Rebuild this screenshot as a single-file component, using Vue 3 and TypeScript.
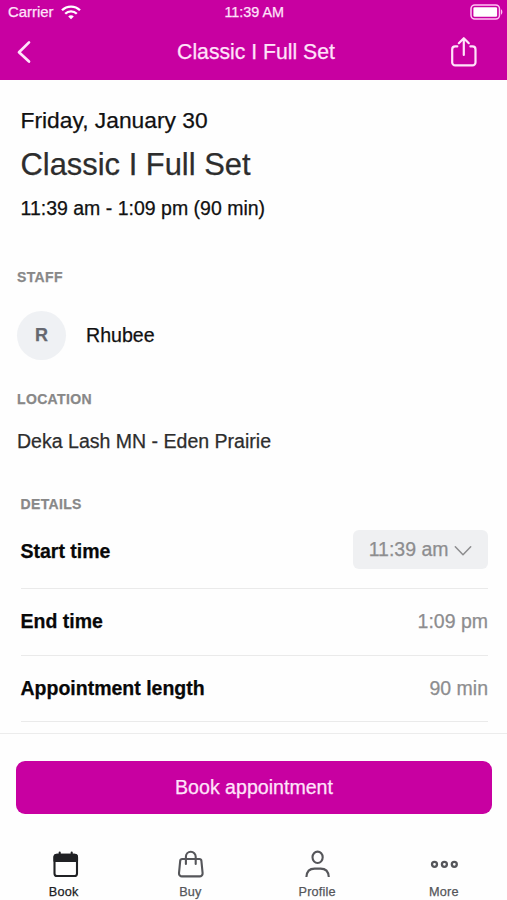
<script setup lang="ts">
interface Detail {
  label: string
  value: string
  picker?: boolean
}

const details: Detail[] = [
  { label: 'Start time', value: '11:39 am', picker: true },
  { label: 'End time', value: '1:09 pm' },
  { label: 'Appointment length', value: '90 min' },
]

const tabs = ['Book', 'Buy', 'Profile', 'More'] as const
</script>

<template>
  <div class="screen">
    <header class="top">
      <div class="status">
        <div class="carrier">
          <span>Carrier</span>
          <svg class="wifi" width="20" height="15" viewBox="0 0 20 15" fill="none" stroke="currentColor" stroke-width="2.3">
            <path d="M1 5.3C6 .3 14 .3 19 5.3" />
            <path d="M4.2 8.7c3.2-3.2 8.4-3.2 11.6 0" />
            <path d="M7.2 11.4c1.6-1.5 4-1.5 5.6 0L10 14.3z" fill="currentColor" stroke="none" />
          </svg>
        </div>
        <span class="clock">11:39 AM</span>
        <svg class="battery" width="33" height="16" viewBox="0 0 33 16" fill="none">
          <rect x="1" y="1" width="28.5" height="14" rx="3.8" stroke="#ffc4f4" stroke-width="1.5" />
          <rect x="3.4" y="3.3" width="23.7" height="9.4" rx="1.2" fill="#fff" />
          <path d="M31 5.3c1.8.8 1.8 4.6 0 5.4z" fill="#ffc4f4" />
        </svg>
      </div>
      <div class="nav">
        <button class="icon-button" aria-label="Back">
          <svg width="16" height="24" viewBox="0 0 16 24" fill="none" stroke="currentColor" stroke-width="2.7" stroke-linecap="round" stroke-linejoin="round">
            <path d="M13 2.4 3 12.2 13 21.6" />
          </svg>
        </button>
        <h1>Classic I Full Set</h1>
        <button class="icon-button" aria-label="Share">
          <svg width="28" height="32" viewBox="0 0 28 32" fill="none" stroke="currentColor" stroke-width="2.2" stroke-linecap="round" stroke-linejoin="round">
            <path d="M7.3 10.4H5.2a3 3 0 0 0-3 3v13a3 3 0 0 0 3 3h17.3a3 3 0 0 0 3-3v-13a3 3 0 0 0-3-3h-2.1M13.8 19V2.4M8.8 7.2l5-5 5 5" />
          </svg>
        </button>
      </div>
    </header>

    <main class="content">
      <section class="summary">
        <p class="date">Friday, January 30</p>
        <h2>Classic I Full Set</h2>
        <p class="time">11:39 am - 1:09 pm (90 min)</p>
      </section>

      <section class="staff">
        <h3>STAFF</h3>
        <div class="person">
          <span class="avatar">R</span>
          <span>Rhubee</span>
        </div>
      </section>

      <section class="location">
        <h3>LOCATION</h3>
        <p>Deka Lash MN - Eden Prairie</p>
      </section>

      <section class="details">
        <h3>DETAILS</h3>
        <div v-for="item in details" :key="item.label" class="row" :class="{ 'row-picker': item.picker }">
          <strong>{{ item.label }}</strong>
          <button v-if="item.picker" class="picker">
            <span>{{ item.value }}</span>
            <svg width="18" height="12" viewBox="0 0 18 12" fill="none" stroke="currentColor" stroke-width="1.5" stroke-linecap="round" stroke-linejoin="round">
              <path d="M1.3 1.7 9 9.8l7.7-8.1" />
            </svg>
          </button>
          <span v-else class="value">{{ item.value }}</span>
        </div>
      </section>
    </main>

    <div class="action">
      <button class="book">Book appointment</button>
    </div>

    <nav class="tabs">
      <a v-for="tab in tabs" :key="tab" class="tab" :class="{ active: tab === 'Book' }">
        <svg width="30" height="30" viewBox="0 0 30 30" fill="none" stroke="currentColor" stroke-width="2.1" stroke-linecap="round" stroke-linejoin="round">
          <template v-if="tab === 'Book'">
            <rect x="5.5" y="5.7" width="22.5" height="21.3" rx="2.6" />
            <path d="M5.5 12V8Q5.5 5.7 8 5.7h17.5Q28 5.7 28 8v4z" fill="currentColor" />
            <path d="M10.7 3.5v3M22.7 3.5v3" />
          </template>
          <template v-else-if="tab === 'Buy'">
            <path d="M7.2 10h17.2a2 2 0 0 1 2 1.8l1.2 12.4a3 3 0 0 1-3 3.2H7a3 3 0 0 1-3-3.2l1.2-12.4a2 2 0 0 1 2-1.8z" />
            <path d="M10.9 14.9V7.7a4.9 4.9 0 0 1 9.8 0v7.2" />
          </template>
          <template v-else-if="tab === 'Profile'">
            <ellipse cx="15.6" cy="8.3" rx="5.1" ry="5.7" />
            <path stroke-linecap="butt" d="M4.4 28c.3-5.9 3.8-8.4 8.3-8.4h5.8c4.5 0 8 2.5 8.3 8.4" />
          </template>
          <template v-else>
            <circle cx="5.5" cy="15.3" r="2.5" stroke-width="2.3" />
            <circle cx="15.4" cy="15.3" r="2.5" stroke-width="2.3" />
            <circle cx="25.3" cy="15.3" r="2.5" stroke-width="2.3" />
          </template>
        </svg>
        <span>{{ tab }}</span>
      </a>
    </nav>
  </div>
</template>

<style>
body {
  margin: 0;
  background: #fefefe;
}
</style>

<style scoped>
.screen {
  display: flex;
  flex-direction: column;
  width: 100%;
  height: 900px;
  overflow: hidden;
  background: #fefefe;
  color: #111;
  font-family: "Liberation Sans", Arial, sans-serif;
  -webkit-text-stroke: 0.25px currentColor;
}
h1, h2, h3, p {
  margin: 0;
  font-weight: 400;
}
button {
  margin: 0;
  padding: 0;
  border: 0;
  background: none;
  color: inherit;
  font: inherit;
}
svg {
  display: block;
  flex: none;
}
.top {
  flex: none;
  height: 80px;
  background: #c800a1;
  color: #ffe3fa;
}
.status {
  display: grid;
  grid-template-columns: 1fr auto 1fr;
  align-items: center;
  height: 24px;
  padding: 0 4.5px 0 8px;
}
.carrier {
  display: flex;
  align-items: center;
  gap: 7px;
  font-size: 14.9px;
}
.wifi {
  color: #fff;
}
.clock {
  padding-right: 2px;
  font-size: 14.4px;
}
.battery {
  justify-self: end;
}
.nav {
  display: grid;
  grid-template-columns: 40px 1fr 40px;
  align-items: center;
  height: 56px;
  padding: 0 24px 0 16px;
}
.icon-button {
  display: flex;
  justify-content: flex-start;
}
.icon-button:last-child {
  justify-content: flex-end;
  padding-right: 5px;
}
h1 {
  padding-left: 13px;
  font-size: 21.2px;
  line-height: 56px;
  text-align: center;
}
.content {
  flex: 1;
  min-height: 0;
  overflow: hidden;
}
.summary {
  padding: 23px 20px 0 20.5px;
}
.date {
  font-size: 22.8px;
  line-height: 34px;
}
h2 {
  color: #2d2d2d;
  font-size: 30.9px;
  line-height: 56px;
}
.time {
  font-size: 19.5px;
  line-height: 30px;
}
h3 {
  color: #888;
  font-size: 14px;
  font-weight: 700;
  line-height: 20px;
  letter-spacing: 0.35px;
}
.staff {
  padding: 44px 17px 0;
}
.person {
  display: flex;
  align-items: center;
  gap: 20px;
  padding-top: 24px;
  font-size: 19.6px;
}
.avatar {
  display: grid;
  place-items: center;
  width: 49px;
  height: 49px;
  border-radius: 50%;
  background: #eff1f4;
  color: #666870;
  font-size: 18px;
  font-weight: 700;
}
.location {
  padding: 29px 17px 0;
}
.location p {
  padding-top: 17px;
  color: #2d2d2d;
  font-size: 19.55px;
  line-height: 30px;
}
.details {
  padding: 38px 19px 0 20.5px;
}
.row {
  display: flex;
  align-items: center;
  justify-content: space-between;
  box-sizing: border-box;
  height: 66.5px;
  border-bottom: 1px solid #eaeaea;
  font-size: 19.5px;
}
.row-picker {
  height: 75px;
}
.value,
.picker {
  color: #8d8d8f;
}
.row strong {
  color: #080808;
}
.picker {
  display: flex;
  align-items: center;
  gap: 5.5px;
  height: 39px;
  margin-bottom: 4px;
  padding: 0 16px;
  border-radius: 6px;
  background: #eff0f2;
}
.picker svg {
  margin-top: 3px;
}
.action {
  box-sizing: border-box;
  flex: none;
  height: 81px;
  padding: 27px 15px 0 16px;
  border-top: 1px solid #ececec;
}
.book {
  display: block;
  width: 100%;
  height: 53px;
  border-radius: 9px;
  background: #c800a1;
  color: #ffe3fa;
  font-size: 19.6px;
}
.tabs {
  display: grid;
  grid-template-columns: repeat(4, 1fr);
  flex: none;
  height: 86px;
}
.tab {
  display: flex;
  flex-direction: column;
  align-items: center;
  gap: 5px;
  padding: 35px 0 0 0.5px;
  color: #55565a;
  font-size: 12.7px;
  line-height: 16px;
  letter-spacing: 0.15px;
}
.tab.active {
  color: #202124;
}
</style>
